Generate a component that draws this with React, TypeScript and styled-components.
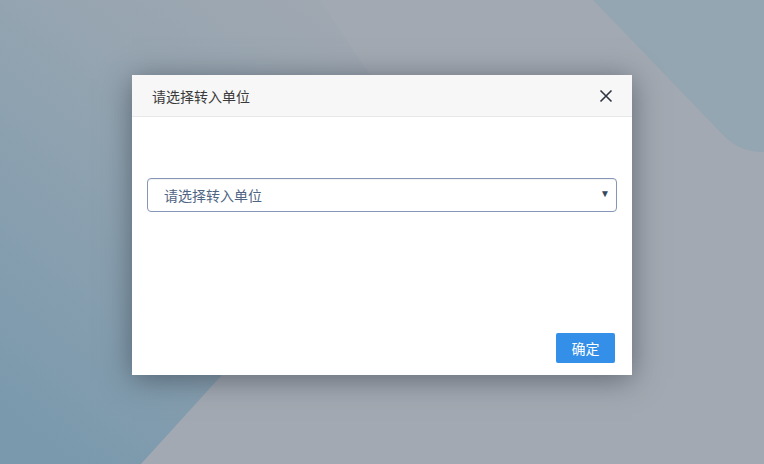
import styled, { createGlobalStyle } from "styled-components";

const GlobalStyle = createGlobalStyle`
  html, body {
    margin: 0;
    padding: 0;
    width: 100%;
    height: 100%;
    overflow: hidden;
  }
  body {
    font-family: "Liberation Sans", "Noto Sans CJK SC", sans-serif;
  }
`;

const Screen = styled.div`
  position: relative;
  width: 764px;
  height: 464px;
  background: #a3a9b2;
  display: flex;
  align-items: flex-start;
  justify-content: center;
  overflow: hidden;
`;

const Backdrop = styled.svg`
  position: absolute;
  inset: 0;
  width: 764px;
  height: 464px;
`;

const Modal = styled.div`
  position: relative;
  margin-top: 75px;
  width: 500px;
  height: 300px;
  background: #fff;
  box-shadow: 0 4px 28px rgba(40, 50, 60, 0.55);
  display: flex;
  flex-direction: column;
`;

const Header = styled.div`
  height: 42px;
  box-sizing: border-box;
  background: #f7f7f7;
  border-bottom: 1px solid #e8e8e8;
  display: flex;
  align-items: center;
  justify-content: space-between;
  padding: 0 18px 0 20px;
`;

const Title = styled.span`
  font-family: "Noto Sans CJK SC", sans-serif;
  font-size: 14px;
  color: #3a3a3a;
`;

const CloseButton = styled.button`
  border: 0;
  background: none;
  padding: 0;
  width: 16px;
  height: 16px;
  display: flex;
  align-items: center;
  justify-content: center;
  cursor: pointer;
`;

const Body = styled.div`
  flex: 1;
  padding: 61px 15px 0 15px;
`;

const Select = styled.div`
  height: 34px;
  box-sizing: border-box;
  border: 1px solid #8696b9;
  border-radius: 4px;
  box-shadow: inset 0 1px 1px rgba(0, 0, 0, 0.06);
  display: flex;
  align-items: center;
  justify-content: space-between;
  padding: 0 6px 0 16px;
`;

const Placeholder = styled.span`
  font-family: "Noto Sans CJK SC", sans-serif;
  font-size: 14px;
  color: #4f6584;
`;

const Caret = styled.span`
  font-size: 10px;
  color: #34495e;
  margin-top: -3px;
`;

const Footer = styled.div`
  display: flex;
  justify-content: flex-end;
  padding: 0 17px 12px 0;
`;

const PrimaryButton = styled.button`
  width: 59px;
  height: 30px;
  border: 0;
  border-radius: 2px;
  background: #338fe8;
  color: #fff;
  font-family: "Noto Sans CJK SC", sans-serif;
  font-size: 14px;
  padding: 0;
  cursor: pointer;
`;

export default function App() {
  return (
    <>
      <GlobalStyle />
      <Screen>
        <Backdrop viewBox="0 0 764 464">
          <defs>
            <linearGradient id="leftShade" x1="0.85" y1="0" x2="0.15" y2="1">
              <stop offset="0" stopColor="#a1a8b1" />
              <stop offset="0.35" stopColor="#96a5b1" />
              <stop offset="1" stopColor="#7a99ad" />
            </linearGradient>
          </defs>
          <polygon points="0,0 320,0 423,154 141,464 0,464" fill="url(#leftShade)" />
          <path
            d="M593,0 L724,136 Q740,152 762,152 L764,152 L764,0 Z"
            fill="#93a6b2"
          />
        </Backdrop>
        <Modal>
          <Header>
            <Title>请选择转入单位</Title>
            <CloseButton aria-label="close">
              <svg width="14" height="14" viewBox="0 0 14 14">
                <path d="M1.5 1.5 L12.5 12.5 M12.5 1.5 L1.5 12.5" stroke="#2f3440" strokeWidth="1.6" />
              </svg>
            </CloseButton>
          </Header>
          <Body>
            <Select>
              <Placeholder>请选择转入单位</Placeholder>
              <Caret>▼</Caret>
            </Select>
          </Body>
          <Footer>
            <PrimaryButton>确定</PrimaryButton>
          </Footer>
        </Modal>
      </Screen>
    </>
  );
}
